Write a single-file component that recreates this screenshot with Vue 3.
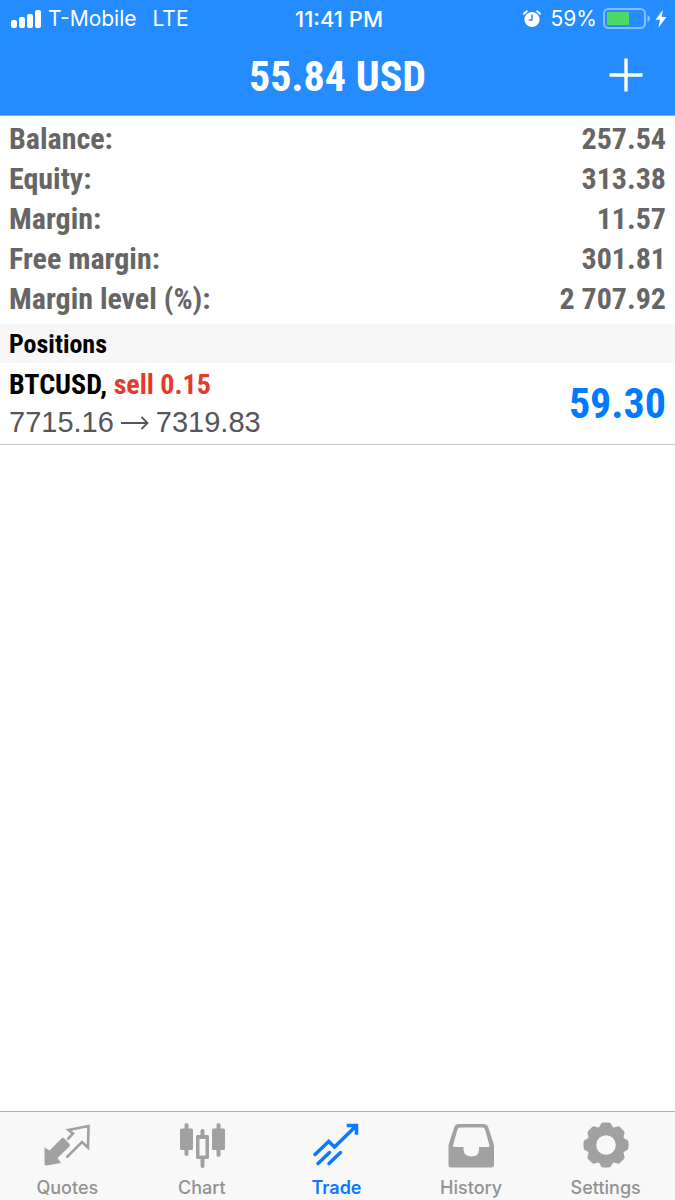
<script setup>
import { ref } from 'vue'

const account = [
  { label: 'Balance:', value: '257.54' },
  { label: 'Equity:', value: '313.38' },
  { label: 'Margin:', value: '11.57' },
  { label: 'Free margin:', value: '301.81' },
  { label: 'Margin level (%):', value: '2 707.92' },
]

const positions = [
  { symbol: 'BTCUSD', side: 'sell 0.15', open: '7715.16', current: '7319.83', profit: '59.30' },
]

const tabs = ['Quotes', 'Chart', 'Trade', 'History', 'Settings']
const active = ref('Trade')
</script>

<template>
  <div class="app">
    <header class="header">
      <div class="status">
        <div class="status-side">
          <svg class="signal" width="31" height="18" viewBox="0 0 31 18" fill="#fff" aria-hidden="true">
            <rect x="0" y="10" width="6" height="8" rx="2" />
            <rect x="8" y="7" width="6" height="11" rx="2" />
            <rect x="16" y="4" width="6" height="14" rx="2" />
            <rect x="24" y="0" width="6" height="18" rx="2" />
          </svg>
          <span>T-Mobile</span>
          <span class="network">LTE</span>
        </div>
        <span class="clock">11:41 PM</span>
        <div class="status-side right">
          <svg class="alarm" width="18" height="18" viewBox="0 0 18 18" aria-hidden="true">
            <circle cx="9" cy="9.500" r="7.600" fill="#fff" />
            <path d="M1 3.800 3.800 1.200M17 3.800 14.200 1.200" fill="none" stroke="#fff" stroke-width="2" stroke-linecap="round" />
            <path d="M9 4.800V10H5.800" fill="none" stroke="#258cff" stroke-width="1.500" />
          </svg>
          <span>59%</span>
          <svg class="battery" width="48" height="22" viewBox="0 0 48 22" aria-hidden="true">
            <rect x="1" y="1" width="41" height="19" rx="4.500" fill="none" stroke="#86bfff" stroke-width="2" />
            <rect x="4" y="4" width="22" height="13" rx="1" fill="#4cd964" />
            <path d="M44.500 7Q47 8 47 10.500T44.500 14Z" fill="#86bfff" />
          </svg>
          <svg class="bolt" width="12" height="18" viewBox="0 0 12 18" fill="#fff" aria-hidden="true">
            <path d="M7.800 0 .5 9.800H5L3.500 17.500 11.500 7H6.800Z" />
          </svg>
        </div>
      </div>
      <div class="titlebar">
        <h1>55.84 USD</h1>
        <button class="add" type="button" aria-label="New order">
          <svg width="34" height="34" viewBox="0 0 34 34" stroke="#fff" stroke-width="3.400" aria-hidden="true">
            <path d="M17 .5V33.500M.5 17H33.500" />
          </svg>
        </button>
      </div>
    </header>

    <main class="content">
      <dl class="account">
        <div v-for="row in account" :key="row.label" class="account-row">
          <dt>{{ row.label }}</dt>
          <dd>{{ row.value }}</dd>
        </div>
      </dl>
      <h2 class="section">Positions</h2>
      <ul class="positions">
        <li v-for="p in positions" :key="p.symbol" class="position">
          <div>
            <div class="deal">{{ p.symbol }}, <span class="side">{{ p.side }}</span></div>
            <div class="prices">
              <span>{{ p.open }}</span>
              <svg width="28" height="14" viewBox="0 0 28 14" fill="none" stroke="#55555a" stroke-width="1.800" aria-label="to">
                <path d="M0 7H26.500M20.500 1 26.500 7 20.500 13" />
              </svg>
              <span>{{ p.current }}</span>
            </div>
          </div>
          <span class="profit">{{ p.profit }}</span>
        </li>
      </ul>
    </main>

    <nav class="tabs">
      <button
        v-for="tab in tabs"
        :key="tab"
        type="button"
        class="tab"
        :class="{ active: tab === active }"
        @click="active = tab"
      >
        <svg width="46" height="46" viewBox="0 0 46 46" aria-hidden="true">
          <g v-if="tab === 'Quotes'">
            <path d="M.5 25.500 5.500 28.500 17.500 16.500Q19 15 20.500 16.500L25.500 22Q26.500 23.500 25 25L13.500 36 17 41 2.500 43.500Q.5 43.500 .5 42Z" fill="currentColor" />
            <path d="M23.500 17.500 29 11.500 24.500 8 44.500 4 44 25.500 38 20 22.500 35.500" fill="none" stroke="currentColor" stroke-width="2.600" />
          </g>
          <g v-else-if="tab === 'Chart'" fill="currentColor">
            <rect x="5.500" y="1" width="4" height="33" rx="2" />
            <rect x="1" y="6.500" width="13" height="21.500" rx="1.500" />
            <rect x="37.500" y="1" width="4" height="34" rx="2" />
            <rect x="33" y="6.500" width="13" height="21.500" rx="1.500" />
            <path d="M21.500 13V9a2 2 0 0 1 4 0V13H28.500Q30 13 30 14.500V35.500Q30 37 28.500 37H25.500V44a2 2 0 0 1-4 0V37H18.500Q17 37 17 35.500V14.500Q17 13 18.500 13ZM20.500 17V33.500H26.500V17Z" fill-rule="evenodd" />
          </g>
          <g v-else-if="tab === 'Trade'" fill="none" stroke="currentColor" stroke-width="3.500" stroke-linecap="round">
            <path d="M2 32.500 15.800 19.500 21.500 25 43 4" />
            <path d="M35.500 3.500H43.500V11" stroke-linecap="square" />
            <path d="M5 41.500 16.500 30.500M16 41.500 27.500 30.500" />
          </g>
          <g v-else-if="tab === 'History'" fill="currentColor">
            <path d="M10 2H36Q39 2 40 4.500L46 23V43Q46 45.500 43 45.500H3.500Q.5 45.500 .5 43V23L6.500 4.500Q7.500 2 10 2ZM12 5.500Q10 5.500 9.500 7.500L5 23.500Q5 25 6.500 25H15.500V27.500Q16 34.500 23.500 34.500T31 27.500V25H40Q41.500 25 41.500 23.500L37 7.500Q36.500 5.500 34.500 5.500Z" fill-rule="evenodd" />
          </g>
          <g v-else>
            <circle cx="23" cy="23" r="14.300" fill="none" stroke="currentColor" stroke-width="9" />
            <path
              v-for="n in 8"
              :key="n"
              d="M14.500 8 17.500 2.800Q18.200.5 20.500.5H25.500Q27.800.5 28.500 2.800L31.500 8Z"
              fill="currentColor"
              :transform="`rotate(${n * 45} 23 23)`"
            />
          </g>
        </svg>
        <span>{{ tab }}</span>
      </button>
    </nav>
  </div>
</template>

<style>
body {
  margin: 0;
  background: #fff;
}
</style>

<style scoped>
.app {
  display: flex;
  flex-direction: column;
  min-height: 100vh;
  font-family: "Roboto Condensed", "Liberation Sans Narrow", "Liberation Sans", sans-serif;
  font-weight: 700;
}

.header {
  background: #258cff;
  border-bottom: 1px solid #7fb2e6;
  color: #fff;
}

.status {
  display: grid;
  grid-template-columns: 1fr auto 1fr;
  align-items: center;
  height: 38px;
  padding: 0 8px 0 11px;
  font: 400 21px/38px Inter, sans-serif;
}

.status-side {
  display: flex;
  align-items: center;
}

.right {
  justify-content: flex-end;
}

.signal {
  margin-right: 6px;
}

.network {
  margin-left: 16px;
}

.clock {
  font-size: 22px;
  font-weight: 500;
}

.alarm {
  margin-right: 10px;
}

.battery {
  margin-left: 6px;
}

.bolt {
  margin-left: 4px;
}

.titlebar {
  display: grid;
  grid-template-columns: 1fr auto 1fr;
  align-items: center;
  height: 77px;
}

h1 {
  grid-column: 2;
  margin: 0;
  font-size: 42px;
  line-height: 77px;
}

.add {
  justify-self: end;
  display: flex;
  margin: 0 32px 4px 0;
  padding: 0;
  border: 0;
  background: none;
}

.content {
  flex: 1;
}

.account {
  margin: 0;
  padding: 3px 9px 5px;
  color: #666;
  font-size: 30px;
  line-height: 40px;
}

.account-row {
  display: flex;
  justify-content: space-between;
}

dd {
  margin: 0;
}

.section {
  margin: 0;
  padding: 2px 9px 0;
  background: #f7f7f7;
  color: #000;
  font-size: 26px;
  line-height: 37px;
}

.positions {
  margin: 0;
  padding: 0;
  list-style: none;
}

.position {
  display: flex;
  justify-content: space-between;
  align-items: center;
  padding: 3px 9px;
  border-bottom: 1px solid #c8c8cc;
}

.deal {
  color: #000;
  font-size: 28px;
  line-height: 38px;
}

.side {
  color: #e23b2e;
}

.prices {
  display: flex;
  align-items: center;
  gap: 7px;
  color: #55555a;
  font: 400 29px/37px "Liberation Sans", sans-serif;
}

.profit {
  color: #007aff;
  font-size: 42px;
  line-height: 48px;
}

.tabs {
  display: grid;
  grid-template-columns: repeat(5, 1fr);
  padding-right: 2px;
  border-top: 1px solid #b2b2b2;
  background: #f8f8f8;
}

.tab {
  display: flex;
  flex-direction: column;
  align-items: center;
  gap: 8px;
  padding: 10px 0 0;
  border: 0;
  background: none;
  color: #929292;
  font: 500 18px/24px Inter, sans-serif;
}

.tab svg {
  color: #a1a1a1;
}

.tab.active,
.tab.active svg {
  color: #087aff;
}

.tab.active {
  font-weight: 600;
}
</style>
